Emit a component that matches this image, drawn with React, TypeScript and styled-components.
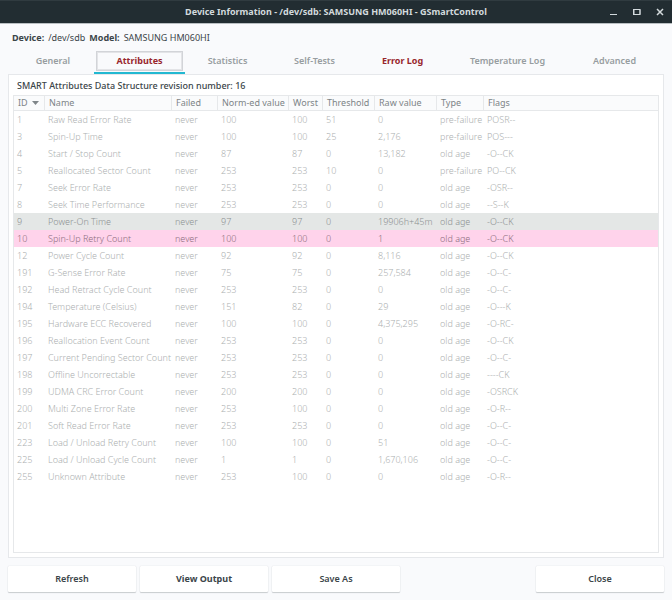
import React from "react";
import styled, { createGlobalStyle } from "styled-components";

const GlobalStyle = createGlobalStyle`
  * { box-sizing: border-box; }
  body {
    margin: 0;
    background: #f9fafc;
    color: #3b4549;
    font-family: "Noto Sans", "Open Sans", sans-serif;
    font-size: 9px;
    line-height: 14px;
  }
  button { font: inherit; color: inherit; border: 0; padding: 0; margin: 0; background: none; }
`;

const Window = styled.div`
  display: flex;
  flex-direction: column;
  min-height: 100vh;
`;

const TitleBar = styled.header`
  display: grid;
  grid-template-columns: 1fr auto 1fr;
  align-items: center;
  height: 24px;
  padding: 0 6px;
  background: #222d32;
  border-top: 1px solid #303b40;
  border-bottom: 1px solid #b9bfc2;
  color: #d3dadd;
`;

const Title = styled.h1`
  grid-column: 2;
  margin: 0;
  font-size: 9px;
  font-weight: 700;
`;

const WindowControls = styled.div`
  display: flex;
  justify-content: flex-end;
  gap: 11px;
`;

const ControlButton = styled.button`
  width: 12px;
  height: 12px;

  svg { display: block; }
`;

const DeviceLine = styled.p`
  display: flex;
  gap: 4px;
  margin: 0;
  padding: 7px 12px 5px;
`;

const DeviceField = styled.span`
  display: flex;
  gap: 4px;
`;

const TabList = styled.div`
  display: grid;
  grid-template-columns: 82fr 91fr 85fr 89fr 87fr 123fr 91fr;
  padding: 0 12px;
`;

const Tab = styled.button<{ $active?: boolean; $alert?: boolean }>`
  height: 24px;
  padding: 0 2px;
  border-bottom: 2px solid ${(p) => (p.$active ? "#22b8d1" : "transparent")};
  color: ${(p) => (p.$alert ? "#98262c" : "#979da0")};
  font-weight: ${(p) => (p.$alert ? 700 : 600)};
`;

const TabLabel = styled.span<{ $focused?: boolean }>`
  display: block;
  padding: 2px 0;
  border: 1px solid ${(p) => (p.$focused ? "#d2d4d8" : "transparent")};
  box-shadow: ${(p) => (p.$focused ? "inset 0 0 0 1px #e3e4e7" : "none")};
`;

const Panel = styled.main`
  flex: 1;
  display: flex;
  flex-direction: column;
  margin: 0 8px;
  padding: 4px;
  background: #fff;
  border: 1px solid #e6e8eb;
`;

const Revision = styled.h2`
  margin: 0;
  padding: 0 4px 2px;
  font-size: 9px;
  font-weight: 500;
`;

const TableFrame = styled.div`
  flex: 1;
  border: 1px solid #e6e8ea;
`;

const Table = styled.table`
  width: 100%;
  table-layout: fixed;
  border-collapse: separate;
  border-spacing: 0;
  text-align: left;
  white-space: nowrap;
`;

const Column = styled.col<{ $width?: number }>`
  width: ${(p) => (p.$width ? `${p.$width}px` : "auto")};
`;

const HeaderCell = styled.th`
  padding: 0 0 0 4px;
  background: #fafbfc;
  border-right: 1px solid #e6e8ea;
  border-bottom: 1px solid #e6e8ea;
  color: #7d8487;
  font-weight: 400;
  line-height: 14px;

  &:last-child { border-right: 0; }
`;

const SortMark = styled.svg`
  margin-left: 4px;
  vertical-align: 1px;
`;

const rowColors = {
  plain: { background: "#fff", color: "#acafb0" },
  info: { background: "#e4e7e6", color: "#8c9192" },
  warning: { background: "#ffd3eb", color: "#8c6c7d" },
};

const Row = styled.tr<{ $tone: keyof typeof rowColors }>`
  height: 17px;
  background: ${(p) => rowColors[p.$tone].background};
  color: ${(p) => rowColors[p.$tone].color};
`;

const Cell = styled.td`
  padding: 0 0 0 3px;
  font-weight: 300;
  line-height: 17px;
`;

const Actions = styled.footer`
  display: grid;
  grid-template-columns: repeat(5, 1fr);
  gap: 4px;
  padding: 8px;
`;

const ActionButton = styled.button<{ $strong?: boolean; $last?: boolean }>`
  height: 26px;
  background: #fff;
  border-radius: 1px;
  box-shadow: 0 0 1px #c4c8cb, 0 1px 1px #c9cccf;
  font-weight: ${(p) => (p.$strong ? 700 : 600)};
  grid-column: ${(p) => (p.$last ? "5" : "auto")};
`;

const tabs = [
  { label: "General" },
  { label: "Attributes", active: true, alert: true },
  { label: "Statistics" },
  { label: "Self-Tests" },
  { label: "Error Log", alert: true },
  { label: "Temperature Log" },
  { label: "Advanced" },
];

const columns: { label: string; width?: number }[] = [
  { label: "ID", width: 31 },
  { label: "Name", width: 127 },
  { label: "Failed", width: 46 },
  { label: "Norm-ed value", width: 71 },
  { label: "Worst", width: 34 },
  { label: "Threshold", width: 52 },
  { label: "Raw value", width: 62 },
  { label: "Type", width: 47 },
  { label: "Flags" },
];

const attributes = [
  ["1", "Raw Read Error Rate", "never", "100", "100", "51", "0", "pre-failure", "POSR--"],
  ["3", "Spin-Up Time", "never", "100", "100", "25", "2,176", "pre-failure", "POS---"],
  ["4", "Start / Stop Count", "never", "87", "87", "0", "13,182", "old age", "-O--CK"],
  ["5", "Reallocated Sector Count", "never", "253", "253", "10", "0", "pre-failure", "PO--CK"],
  ["7", "Seek Error Rate", "never", "253", "253", "0", "0", "old age", "-OSR--"],
  ["8", "Seek Time Performance", "never", "253", "253", "0", "0", "old age", "--S--K"],
  ["9", "Power-On Time", "never", "97", "97", "0", "19906h+45m", "old age", "-O--CK"],
  ["10", "Spin-Up Retry Count", "never", "100", "100", "0", "1", "old age", "-O--CK"],
  ["12", "Power Cycle Count", "never", "92", "92", "0", "8,116", "old age", "-O--CK"],
  ["191", "G-Sense Error Rate", "never", "75", "75", "0", "257,584", "old age", "-O--C-"],
  ["192", "Head Retract Cycle Count", "never", "253", "253", "0", "0", "old age", "-O--C-"],
  ["194", "Temperature (Celsius)", "never", "151", "82", "0", "29", "old age", "-O---K"],
  ["195", "Hardware ECC Recovered", "never", "100", "100", "0", "4,375,295", "old age", "-O-RC-"],
  ["196", "Reallocation Event Count", "never", "253", "253", "0", "0", "old age", "-O--CK"],
  ["197", "Current Pending Sector Count", "never", "253", "253", "0", "0", "old age", "-O--C-"],
  ["198", "Offline Uncorrectable", "never", "253", "253", "0", "0", "old age", "----CK"],
  ["199", "UDMA CRC Error Count", "never", "200", "200", "0", "0", "old age", "-OSRCK"],
  ["200", "Multi Zone Error Rate", "never", "253", "100", "0", "0", "old age", "-O-R--"],
  ["201", "Soft Read Error Rate", "never", "253", "253", "0", "0", "old age", "-O--C-"],
  ["223", "Load / Unload Retry Count", "never", "100", "100", "0", "51", "old age", "-O--C-"],
  ["225", "Load / Unload Cycle Count", "never", "1", "1", "0", "1,670,106", "old age", "-O--C-"],
  ["255", "Unknown Attribute", "never", "253", "100", "0", "0", "old age", "-O-R--"],
];

const tones: Record<string, keyof typeof rowColors> = { "9": "info", "10": "warning" };

export default function App() {
  return (
    <>
      <GlobalStyle />
      <Window>
        <TitleBar>
          <Title>Device Information - /dev/sdb: SAMSUNG HM060HI - GSmartControl</Title>
          <WindowControls>
            <ControlButton aria-label="Minimize">
              <svg width="12" height="12" viewBox="0 0 12 12" stroke="currentColor" fill="none">
                <path d="M2 8.5h7" />
              </svg>
            </ControlButton>
            <ControlButton aria-label="Maximize">
              <svg width="12" height="12" viewBox="0 0 12 12" stroke="currentColor" fill="none">
                <path d="M3 3.5h6v5h-6zM2.5 3v6M9 3v6" />
              </svg>
            </ControlButton>
            <ControlButton aria-label="Close window">
              <svg width="12" height="12" viewBox="0 0 12 12" stroke="currentColor" strokeWidth="1.5" fill="none">
                <path d="M3 3l6 6M9 3l-6 6" />
              </svg>
            </ControlButton>
          </WindowControls>
        </TitleBar>

        <DeviceLine>
          <DeviceField><b>Device:</b><span>/dev/sdb</span></DeviceField>
          <DeviceField><b>Model:</b><span>SAMSUNG HM060HI</span></DeviceField>
        </DeviceLine>

        <TabList role="tablist">
          {tabs.map((t) => (
            <Tab key={t.label} role="tab" aria-selected={!!t.active} $active={t.active} $alert={t.alert}>
              <TabLabel $focused={t.active}>{t.label}</TabLabel>
            </Tab>
          ))}
        </TabList>

        <Panel>
          <Revision>SMART Attributes Data Structure revision number: 16</Revision>
          <TableFrame>
            <Table>
              <colgroup>
                {columns.map((c) => <Column key={c.label} $width={c.width} />)}
              </colgroup>
              <thead>
                <tr>
                  {columns.map((c) => (
                    <HeaderCell key={c.label} scope="col">
                      {c.label}
                      {c.label === "ID" && (
                        <SortMark width="7" height="4" viewBox="0 0 7 4" fill="#7f8689">
                          <path d="M0 0h7L3.5 4z" />
                        </SortMark>
                      )}
                    </HeaderCell>
                  ))}
                </tr>
              </thead>
              <tbody>
                {attributes.map((row) => (
                  <Row key={row[0]} $tone={tones[row[0]] ?? "plain"}>
                    {row.map((value, i) => <Cell key={i}>{value}</Cell>)}
                  </Row>
                ))}
              </tbody>
            </Table>
          </TableFrame>
        </Panel>

        <Actions>
          <ActionButton>Refresh</ActionButton>
          <ActionButton $strong>View Output</ActionButton>
          <ActionButton>Save As</ActionButton>
          <ActionButton $last>Close</ActionButton>
        </Actions>
      </Window>
    </>
  );
}
